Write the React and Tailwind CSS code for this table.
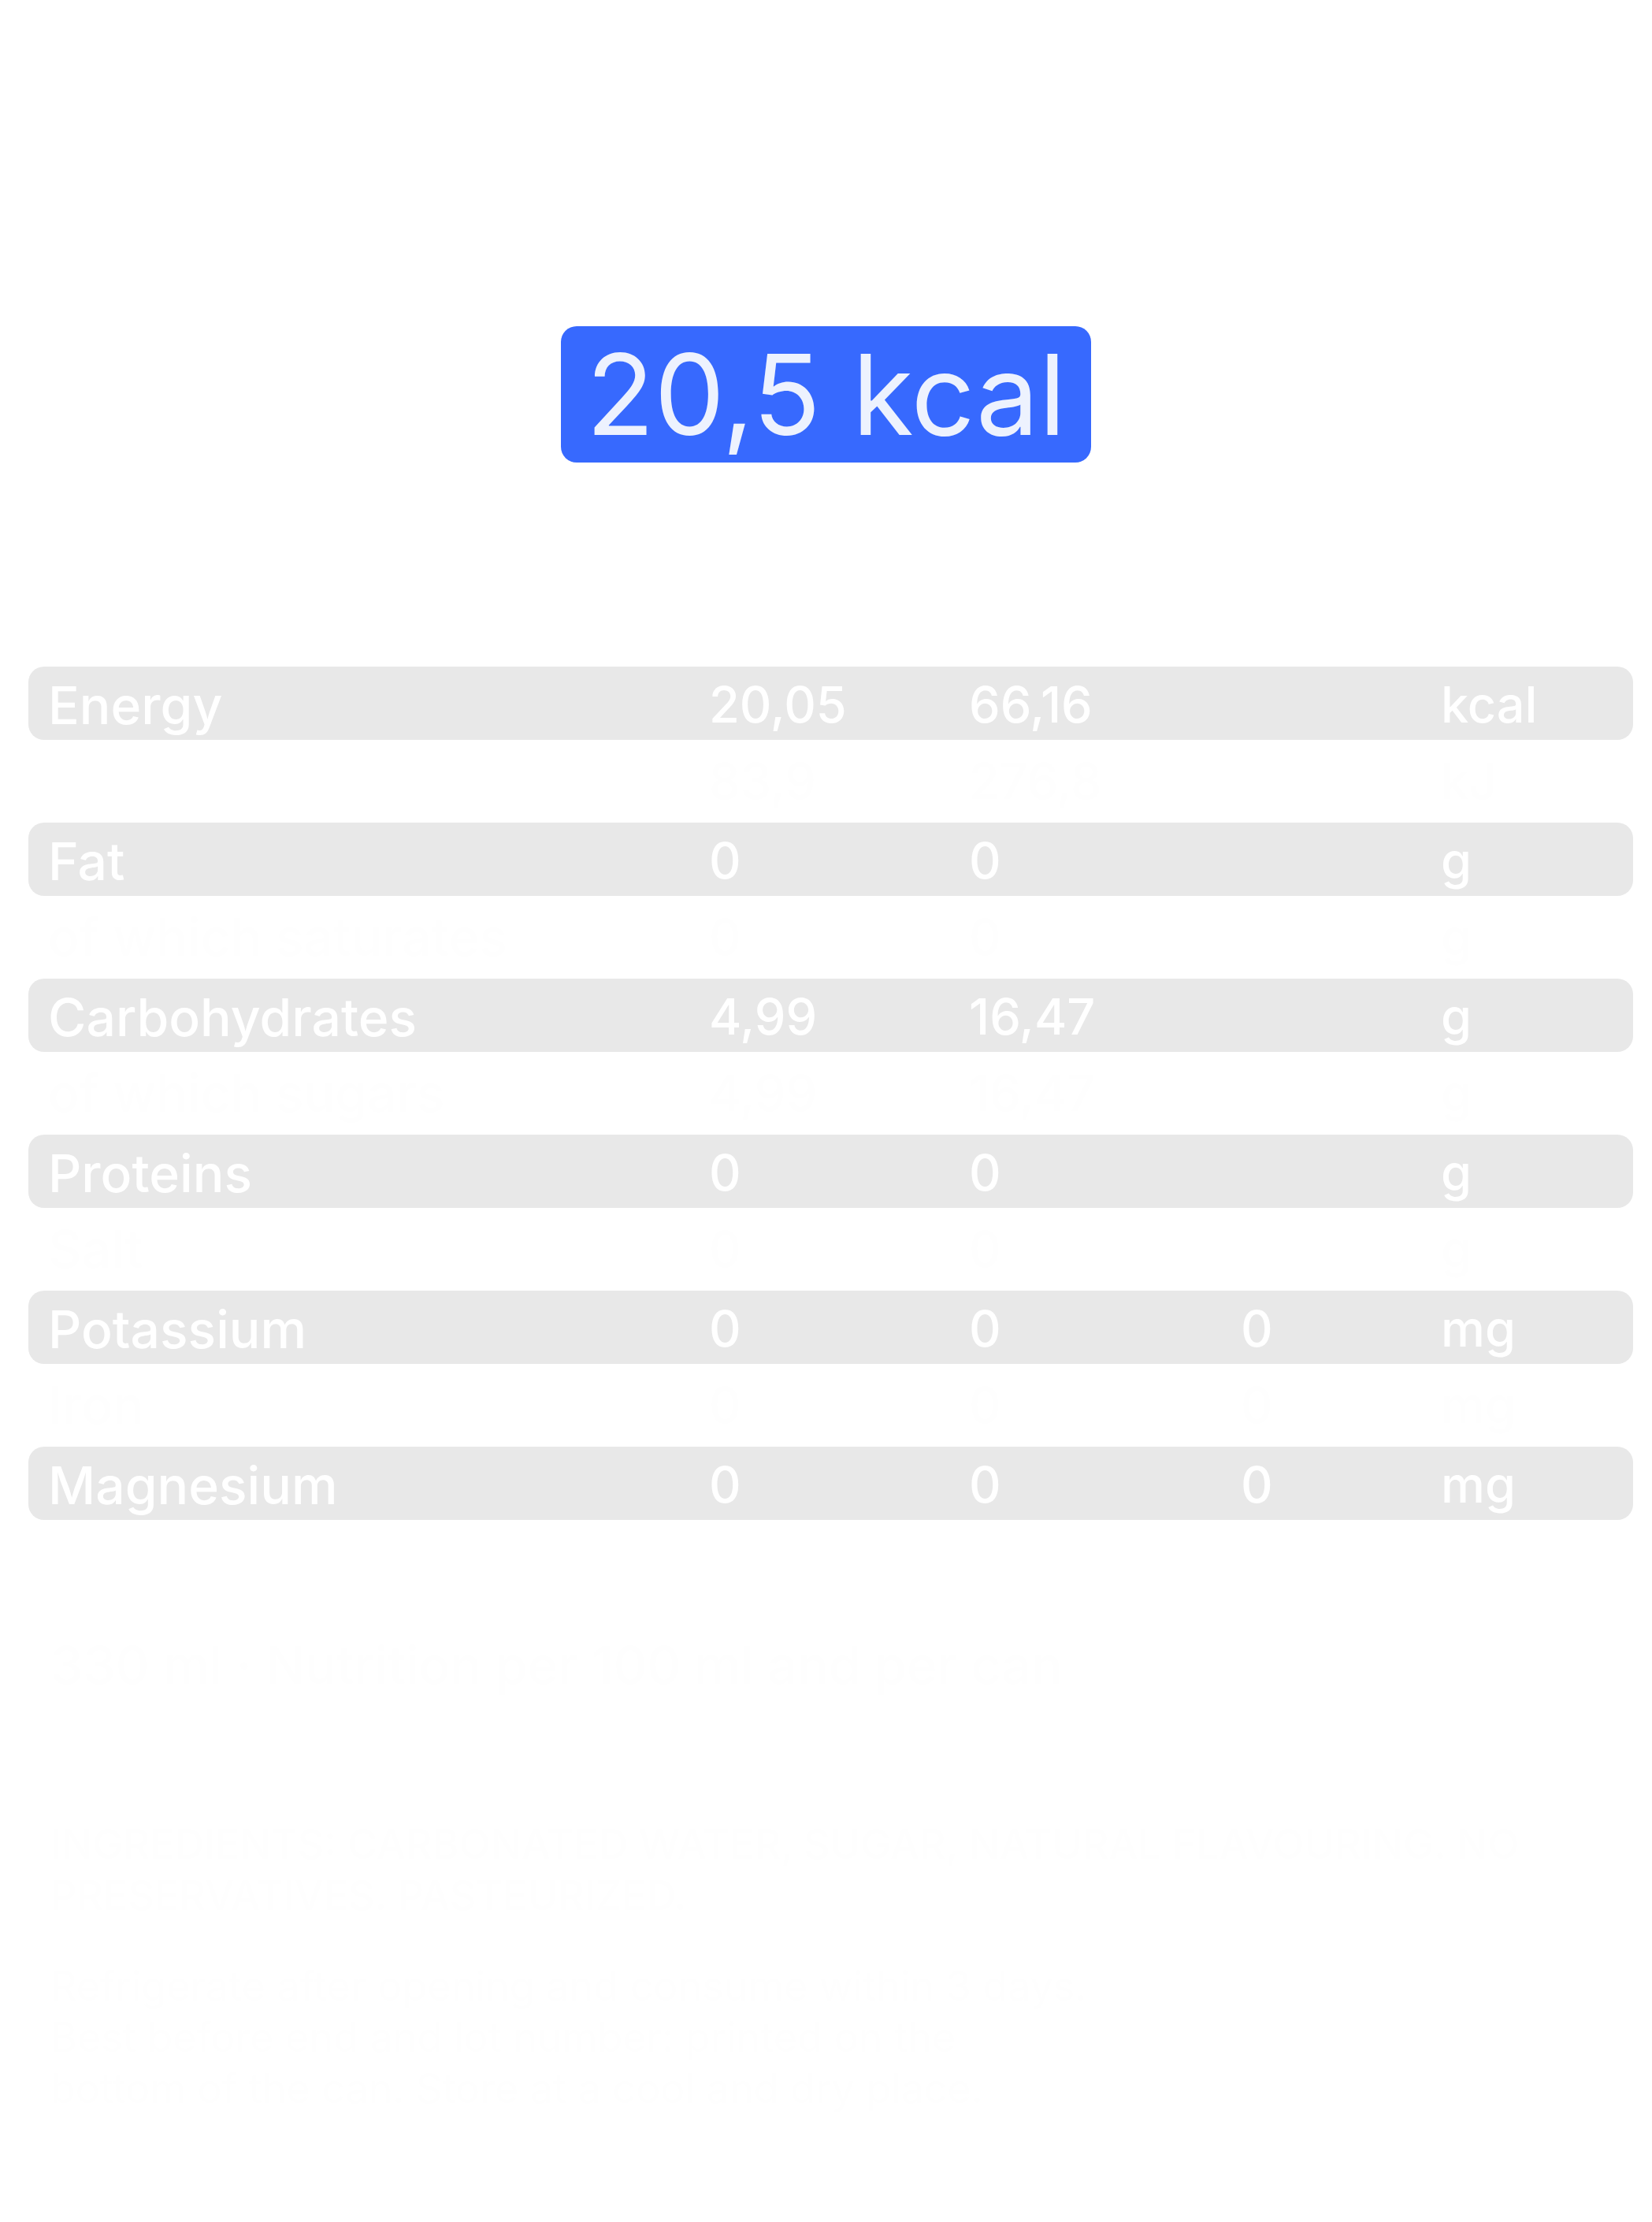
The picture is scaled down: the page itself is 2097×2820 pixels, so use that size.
import React from 'react'

const ROWS = [
  { label: 'Energy', a: '20,05', b: '66,16', c: '', unit: 'kcal',
    ghost: { label: '', a: '83,9', b: '276,8', c: '', unit: 'kJ' } },
  { label: 'Fat', a: '0', b: '0', c: '', unit: 'g',
    ghost: { label: 'of which saturates', a: '0', b: '0', c: '', unit: 'g' } },
  { label: 'Carbohydrates', a: '4,99', b: '16,47', c: '', unit: 'g',
    ghost: { label: 'of which sugars', a: '4,99', b: '16,47', c: '', unit: 'g' } },
  { label: 'Proteins', a: '0', b: '0', c: '', unit: 'g',
    ghost: { label: 'Salt', a: '0', b: '0', c: '', unit: 'g' } },
  { label: 'Potassium', a: '0', b: '0', c: '0', unit: 'mg',
    ghost: { label: 'Iron', a: '0', b: '0', c: '0', unit: 'mg' } },
  { label: 'Magnesium', a: '0', b: '0', c: '0', unit: 'mg',
    ghost: { label: '', a: '', b: '', c: '', unit: '' } },
]

// five columns: label / per 100 ml / per can / % RI / unit
const cols = 'grid grid-cols-[839px_330px_345px_254px_1fr] pl-[25px]'

function Row({ r }) {
  return (
    <div className={`${cols} h-[93px] items-center rounded-[20px] bg-[#e8e8e8] text-white`}>
      <span className="text-[66px] font-medium leading-[93px] pt-[3px]">{r.label}</span>
      <span className="text-[63px] font-medium leading-[93px]">{r.a}</span>
      <span className="text-[63px] font-medium leading-[93px]">{r.b}</span>
      <span className="text-[63px] font-medium leading-[93px]">{r.c}</span>
      <span className="text-[63px] font-medium leading-[93px]">{r.unit}</span>
    </div>
  )
}

// nearly invisible sub-line under each row (white on white in the app)
function Ghost({ g }) {
  return (
    <div className={`${cols} h-[105px] items-center text-[#fefefe]`}>
      <span className="text-[66px] font-medium leading-[93px]">{g.label}</span>
      <span className="text-[63px] font-medium leading-[93px]">{g.a}</span>
      <span className="text-[63px] font-medium leading-[93px]">{g.b}</span>
      <span className="text-[63px] font-medium leading-[93px]">{g.c}</span>
      <span className="text-[63px] font-medium leading-[93px]">{g.unit}</span>
    </div>
  )
}

export default function App() {
  return (
    <div className="w-[2097px] min-h-[2820px] bg-white pt-[414px]"
      style={{ fontFamily: 'Inter, "Noto Sans", sans-serif' }}>

      <div className="flex justify-center">
        <div className="h-[173px] px-[32px] rounded-[20px] bg-[#3769fe] text-[#edf2fe] text-[142px] leading-[173px] font-normal whitespace-nowrap">
          20,5 kcal
        </div>
      </div>

      <div className="mt-[259px] ml-[36px] mr-[24px] flex flex-col">
        {ROWS.map(r => (
          <div key={r.label} className="flex flex-col">
            <Row r={r} />
            <Ghost g={r.ghost} />
          </div>
        ))}
      </div>

      {/* product text, also white on white */}
      <div className="px-[64px] text-[#fefefe] pb-[120px]">
        <p className="mt-[33px] text-[66px] font-medium leading-[93px] whitespace-nowrap">330 ml · Nutrition per 100 ml and per can</p>
        <p className="mt-[148px] text-[52px] font-medium leading-[65px] uppercase whitespace-nowrap">
          Ingredients: carbonated water, sugar, natural flavouring. No<br />
          preservatives. Pasteurized.
        </p>
        <p className="mt-[50px] text-[52px] leading-[65px] whitespace-nowrap">
          Refrigerate after opening and consume within 3 days.<br />
          Best before end and lot number: printed on the<br />
          bottom of the can. Store at a cool and dry place.
        </p>
      </div>
    </div>
  )
}
